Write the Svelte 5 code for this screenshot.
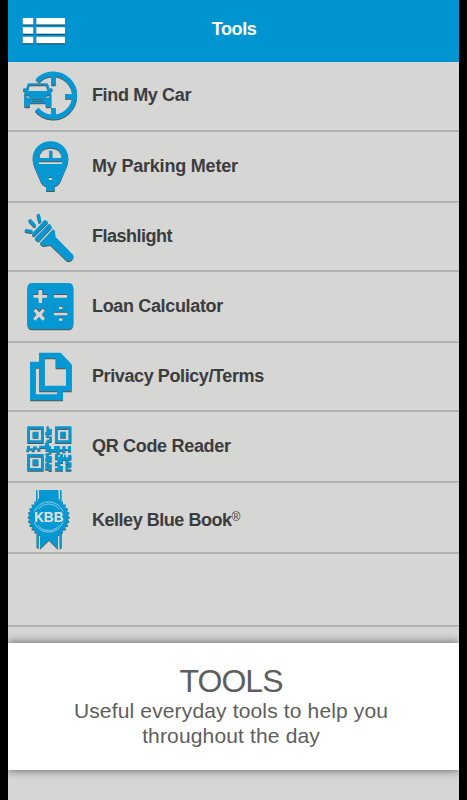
<script>
  const rows = [
    { id: 'car', label: 'Find My Car', h: 70, mid: 33, dy: 0, ls: -0.36 },
    { id: 'meter', label: 'My Parking Meter', h: 71, mid: 34, dy: 3, ls: -0.2 },
    { id: 'torch', label: 'Flashlight', h: 69, mid: 33, dy: 3, ls: -0.5 },
    { id: 'calc', label: 'Loan Calculator', h: 71, mid: 34, dy: 0, ls: -0.34 },
    { id: 'docs', label: 'Privacy Policy/Terms', h: 69, mid: 33, dy: 3, ls: -0.4 },
    { id: 'qr', label: 'QR Code Reader', h: 71, mid: 34, dy: -6, ls: -0.31 },
    { id: 'kbb', label: 'Kelley Blue Book', mark: '®', h: 71, mid: 37, dy: 3, ls: -0.47 }
  ];
  const teeth = Array.from({ length: 60 }, (_, i) => {
    const a = (i * Math.PI) / 30;
    const r = i % 2 ? 56 : 64;
    return `${(116 + r * Math.cos(a)).toFixed(1)},${(105 + r * Math.sin(a)).toFixed(1)}`;
  }).join(' ');
</script>

<div class="screen">
  <header>
    <svg class="menu" width="44" height="28" viewBox="0 0 44 28" fill="#fff">
      <path d="M.7 1h10.6v6.5H.7zM14.3 1h28.7v6.5H14.3zM.7 10.3h10.6v6.5H.7zM14.3 10.3h28.7v6.5H14.3zM.7 19.7h10.6v6.5H.7zM14.3 19.7h28.7v6.5H14.3z" />
    </svg>
    <h1>Tools</h1>
  </header>

  <main>
    {#each rows as row}
      <div class="row" style="height: {row.h}px">
        <svg class="icon" width="80" height="70" viewBox="0 {row.dy} 240 210">
          {#if row.id === 'car'}
            <path fill="none" stroke="#0698d3" stroke-width="15" d="M82 57A64.5 64.5 0 1 1 80 142" />
            <path d="M123 40h14v30h-14zM165 96h30v14h-30zM123 138h14v30h-14z" />
            <path fill-rule="evenodd" d="M57 64H109Q114 64 115 68L120 85Q124 90 124 96V133Q124 136 120 136H111Q107 136 107 132V124H60V132Q60 136 56 136H47Q43 136 43 133V96Q43 90 47 85L52 68Q53 64 57 64ZM59 70L54 87H113L108 70ZM49 99V106L62 108L58 101ZM118 99V106L105 108L109 101ZM65 111H102V113H65ZM66 117H101V119H66Z" />
            <path d="M39 82q0-3 4-3h5v9h-5q-4 0-4-3zM119 79h5q4 0 4 4t-4 5h-5z" />
          {:else if row.id === 'meter'}
            <path fill-rule="evenodd" d="M121.500 31C152 31 175 54 175 83Q175 95 170 107L150 154Q146 162 134 166V180H108V166Q97 162 93 154L73 107Q68 95 68 83C68 54 91 31 121.500 31ZM88 81H155Q153 50 121.500 50Q90 50 88 81ZM87 91V99H156V91ZM116 138V147H126V138Z" />
            <path d="M117 59h10v23h-10z" />
          {:else if row.id === 'torch'}
            <g stroke="#0698d3" stroke-width="10" stroke-linecap="round">
              <path d="M49 86L63 88M60 56L73 70M85 40L89 57" />
            </g>
            <path d="M66 98Q66 92 73 87L95 64Q100 54 106 54Q114 57 114 62L73 103Q68 103 66 98Z" />
            <path d="M75 108L116 66L120 67Q126 72 125 77L87 118Q83 119 77 113Q74 110 75 108Z" />
            <path d="M90 123L129 82Q134 84 135 90L136 104L189 158Q193 166 186 173Q178 180 170 176L121 129Q112 131 102 132Q92 131 90 123Z" />
          {:else if row.id === 'calc'}
            <path fill-rule="evenodd" d="M68 33H174Q190 33 190 49V156Q190 172 174 172H68Q52 172 52 156V49Q52 33 68 33ZM85 51V66H70V77H85V93H97V77H112V66H97V51ZM131 66V77H172V66ZM132 119V130H173V119ZM147 101V111H158V101ZM147 136V146H158V136ZM77 107L69 115L79 126L68 138L76 146L87 134L98 146L107 138L96 126L106 114L98 107L88 118Z" />
          {:else if row.id === 'docs'}
            <path fill-rule="evenodd" d="M87 32H152L185 67V148H159V175H60V59H87ZM104 49V131H168V79H137V49ZM77 77V157H142V148H87V77Z" />
          {:else if row.id === 'qr'}
            <g>
              {#each [[52, 37], [135, 37], [52, 120]] as [x, y]}
                <path fill-rule="evenodd" d="M{x} {y}h49v50h-49zM{x + 8} {y + 8}v34h33v-34zM{x + 16} {y + 16}h17v18h-17z" />
              {/each}
              <path d="M110 37h6v7h9v17h-8v8h-8v-8h-3v-7h4zM118 67h7v17h-8v9h-11v-8h4v-8h8zM52 95h8v8h10v-6h10v6h8v-8h17v-8h10v9h8v9h9v-9h17v9h9v-9h8v9h8v-9h9v17h-9v-5h-8v7h-9v-4h-8v10h-9v-8h-16v6h-8v-8h-9v-9h-16v8h-9v-6h-8v8h-9v-5h-8v5h-8zM106 118h10v8h9v17h-8v8h8v10h-9v-6h-10v-8h4v-7h-4v-9h4zM106 158h10v6h9v7h-9v-4h-10zM135 120h8v8h8v-8h8v10h8v8h-8v9h-8v9h8v14h-24v-8h8v-8h-8v-9h8v-9h-8zM162 122h5v8h8v-8h9v15h-8v13h-9v-13h-5zM167 153h9v-8h8v13h-9v7h9v5h-17z" />
            </g>
          {:else}
            <path d="M78 24h4v40h-4zM87 24h58v40H87zM150 24h4v40h-4zM80 145h6v54l-6-4zM90 145h54v56l-27-27-27 26zM149 145h6v52l-6 2z" />
            <polygon points={teeth} />
            <path d="M73 89A46 46 0 0 1 159 89M73 121A46 46 0 0 0 159 121M84 82A40 40 0 0 1 148 82M84 130A40 40 0 0 0 148 130" fill="none" stroke="#a9cfdf" stroke-width="2.500" />
            <text x="117" y="121" text-anchor="middle" textLength="88" lengthAdjust="spacingAndGlyphs">KBB</text>
          {/if}
        </svg>
        <span class="label" style="line-height: {row.mid * 2}px; letter-spacing: {row.ls}px">{row.label}{#if row.mark}<sup>{row.mark}</sup>{/if}</span>
      </div>
    {/each}
    <div class="row blank"></div>
  </main>

  <section>
    <h2>TOOLS</h2>
    <p>Useful everyday tools to help you<br />throughout the day</p>
  </section>
</div>

<style>
  :global(body) {
    background: #000;
  }
  .screen {
    box-sizing: border-box;
    width: 450.5px;
    height: 800px;
    margin-left: 8.3px;
    overflow: hidden;
    background: #d6d6d4;
    font-family: 'Liberation Sans', Arial, sans-serif;
  }
  header {
    display: grid;
    grid-template-columns: 60px 1fr 60px;
    height: 62px;
    background: #0095d0;
  }
  .menu {
    margin: 17px 0 0 14px;
    filter: drop-shadow(0 1px 0.5px #0009);
  }
  h1 {
    margin: 0;
    padding-left: 1px;
    color: #fff;
    font-size: 18px;
    line-height: 58px;
    text-align: center;
    letter-spacing: -0.4px;
  }
  .row {
    box-sizing: border-box;
    display: flex;
    align-items: flex-start;
    border-bottom: 2px solid #b2b2b1;
  }
  .blank {
    height: 73px;
  }
  .icon {
    flex: none;
    margin-left: 1.7px;
    overflow: visible;
    fill: #0698d3;
    filter: drop-shadow(0 1px 0.4px #0009);
  }
  .icon text {
    fill: #dde3e3;
    stroke: #dde3e3;
    stroke-width: 0.5px;
    font-size: 43px;
    font-weight: bold;
  }
  .label {
    margin-left: 2px;
    color: #3b3c3e;
    font-size: 18px;
    font-weight: bold;
    white-space: nowrap;
  }
  sup {
    font-size: 12px;
    font-weight: normal;
    line-height: 0;
    vertical-align: 5px;
  }
  section {
    box-sizing: border-box;
    height: 127px;
    margin-top: 16px;
    padding-top: 20px;
    background: #fff;
    box-shadow: 0 0 9px #0009;
    color: #5e5e5e;
    text-align: center;
  }
  h2 {
    margin: 0;
    padding-right: 5px;
    font-size: 32px;
    font-weight: normal;
    line-height: 36px;
    letter-spacing: -1px;
  }
  p {
    margin: -1px 0 0;
    padding-right: 5px;
    font-size: 21px;
    line-height: 25px;
    letter-spacing: 0.15px;
  }
</style>
